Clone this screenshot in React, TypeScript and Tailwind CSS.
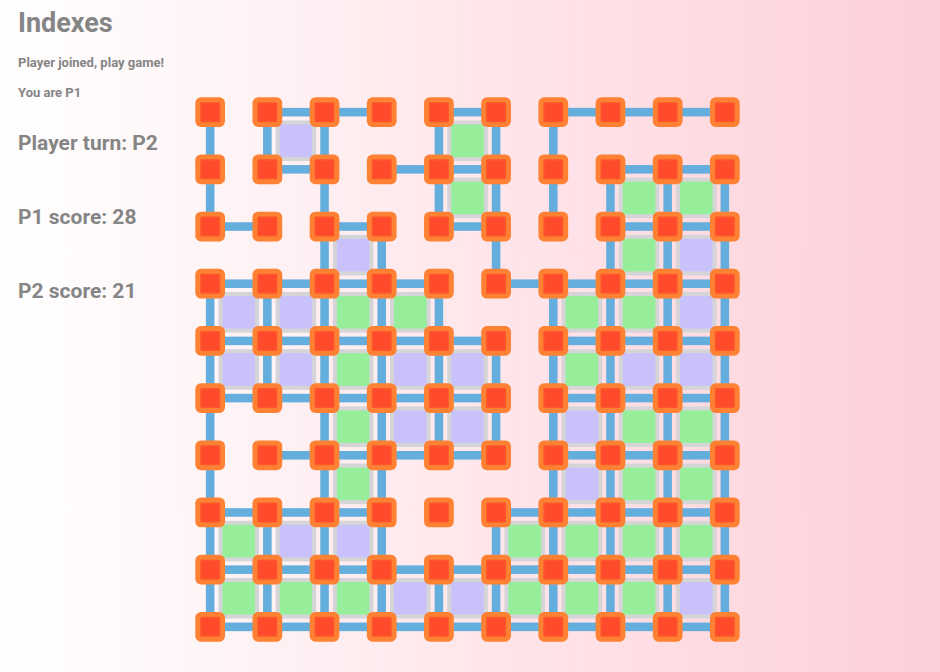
const PITCH = 40;
const ORIGIN = 12;

const horizontalEdges = [
  '011010111',
  '010110011',
  '101010011',
  '111101111',
  '111110111',
  '111110111',
  '011110111',
  '111001111',
  '111111111',
  '111111111',
];

const verticalEdges = [
  '1110111000',
  '1010111111',
  '0011010111',
  '1111101111',
  '1111111111',
  '1011111111',
  '1011001111',
  '1111011111',
  '1111111111',
];

// 1 and 2 name the player that owns the box.
const boxes = [
  '.2..1....',
  '....1..11',
  '..2....12',
  '2211..112',
  '22122.122',
  '..122.211',
  '..1...211',
  '122..1111',
  '111221112',
];

const at = (index: number) => ORIGIN + index * PITCH;

function cells(rows: string[]) {
  return rows.flatMap((row, r) => [...row].map((value, c) => ({ r, c, value })));
}

function Board() {
  const dots = Array.from({ length: 100 }, (_, i) => ({ r: Math.floor(i / 10), c: i % 10 }));

  return (
    <svg viewBox="0 0 384 384" className="w-full max-w-[549px]" role="img" aria-label="Game board">
      {cells(boxes)
        .filter((b) => b.value !== '.')
        .map(({ r, c, value }) => (
          <g key={`b${r}-${c}`}>
            <rect x={at(c) + 5.8} y={at(r) + 5.8} width={28.4} height={28.4} className="fill-[#d5d5d8]" />
            <rect
              x={at(c) + 8.6}
              y={at(r) + 8.6}
              width={22.8}
              height={22.8}
              className={value === '1' ? 'fill-[#96ee9a]' : 'fill-[#c9c1fa]'}
            />
          </g>
        ))}
      {cells(horizontalEdges)
        .filter((e) => e.value === '1')
        .map(({ r, c }) => (
          <rect key={`h${r}-${c}`} x={at(c)} y={at(r) - 3} width={PITCH} height={6} className="fill-[#64aedd]" />
        ))}
      {cells(verticalEdges)
        .filter((e) => e.value === '1')
        .map(({ r, c }) => (
          <rect key={`v${r}-${c}`} x={at(c) - 3} y={at(r)} width={6} height={PITCH} className="fill-[#64aedd]" />
        ))}
      {dots.map(({ r, c }) => (
        <g key={`d${r}-${c}`}>
          <rect x={at(c) - 10.4} y={at(r) - 10.4} width={20.8} height={20.8} rx={4} className="fill-[#ff8133]" />
          <rect x={at(c) - 7} y={at(r) - 7} width={14} height={14} rx={1} className="fill-[#ff572c]" />
          <rect x={at(c) - 6} y={at(r) - 6} width={12} height={12} className="fill-[#ff4a2b]" />
        </g>
      ))}
    </svg>
  );
}

export default function App() {
  return (
    <div className="flex min-h-screen bg-linear-to-r from-white to-[#fdcfd8] font-['Roboto','Liberation_Sans',sans-serif] font-bold text-[#858585]">
      <header className="w-[193px] shrink-0 pl-[18px]">
        <h1 className="pt-[7px] text-[27px] leading-8">Indexes</h1>
        <p className="mt-[14px] text-[13px] leading-5">Player joined, play game!</p>
        <p className="mt-[10px] text-[13px] leading-5">You are P1</p>
        <h2 className="mt-6 text-[21px] leading-8">Player turn: P2</h2>
        <h2 className="mt-[42px] text-[21px] leading-8">P1 score: 28</h2>
        <h2 className="mt-[42px] text-[21px] leading-8">P2 score: 21</h2>
      </header>
      <main className="min-w-0 flex-1 pt-[95px]">
        <Board />
      </main>
    </div>
  );
}
